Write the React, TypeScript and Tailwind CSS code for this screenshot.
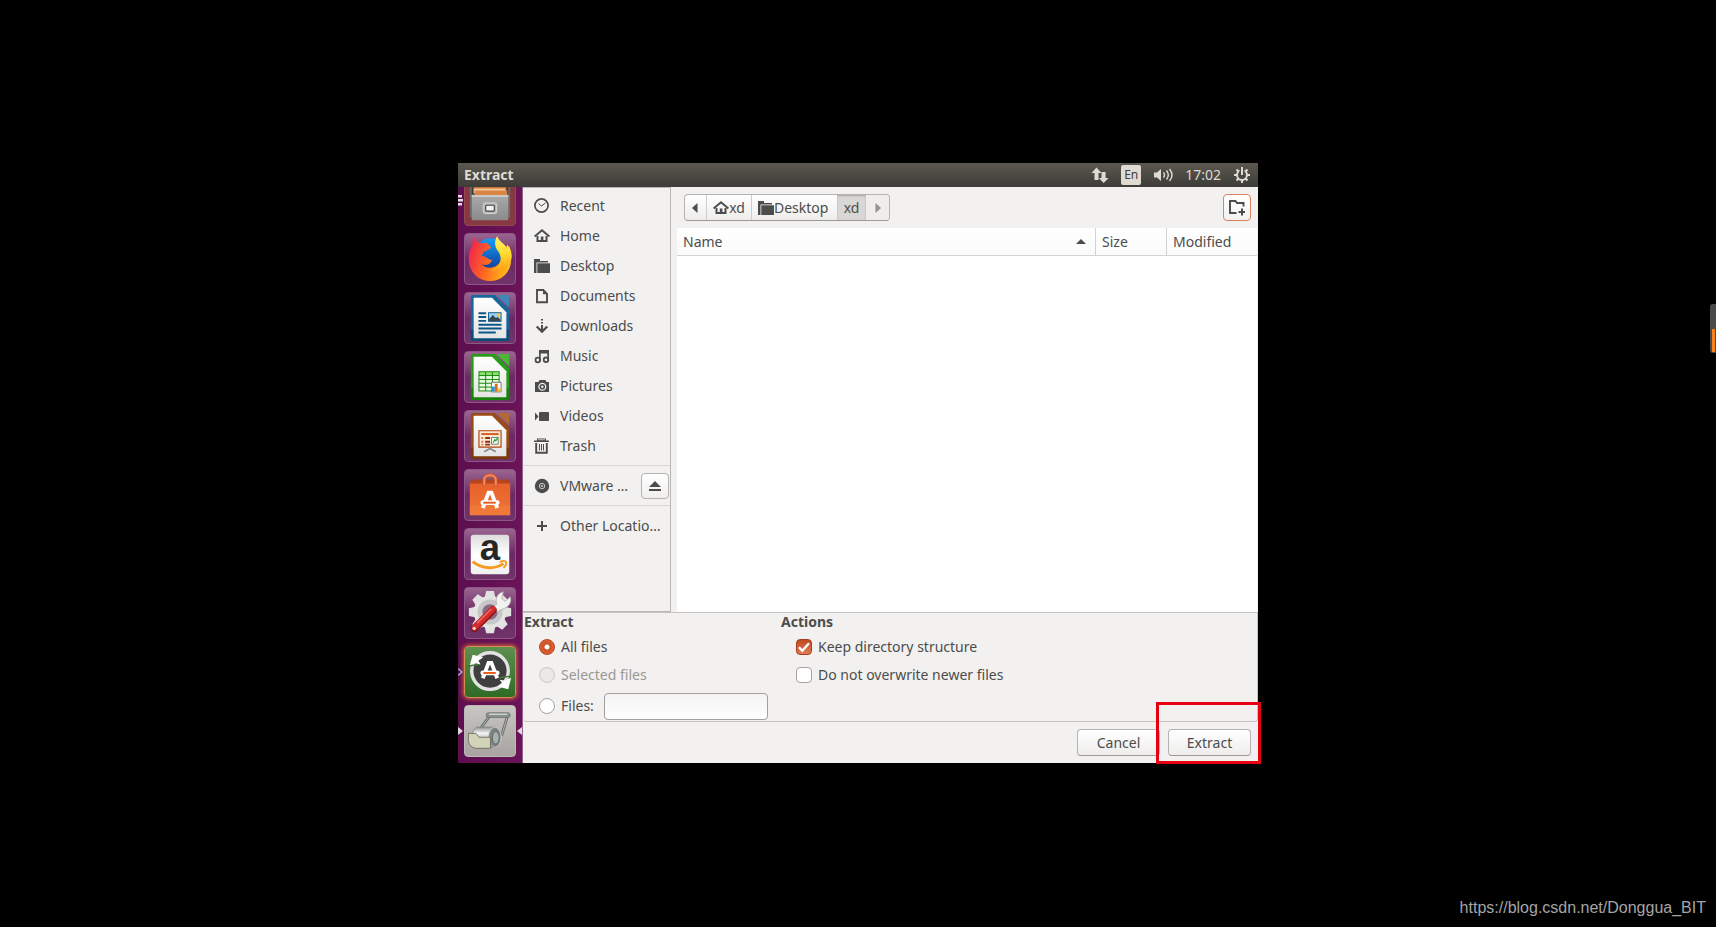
import { useState } from "react";
import type { ReactNode } from "react";

const INK = "#4c4c4c";

function Glyph({ children, className = "" }: { children: ReactNode; className?: string }) {
  return (
    <svg viewBox="0 0 16 16" className={`size-4 shrink-0 ${className}`} fill={INK} aria-hidden="true">
      {children}
    </svg>
  );
}

const RecentIcon = () => (
  <Glyph>
    <circle cx="7.500" cy="7.500" r="6.600" fill="none" stroke={INK} strokeWidth="1.700" />
    <path d="M4.500 5.500l3 2.600 4-3.200" fill="none" stroke={INK} strokeWidth="1" />
  </Glyph>
);

const HomeIcon = () => (
  <Glyph>
    <path d="M0.600 8.500L8 2.300 15.400 8.500" fill="none" stroke={INK} strokeWidth="2" />
    <path d="M3.500 8v4.900h9V8" fill="none" stroke={INK} strokeWidth="2" />
    <path d="M6.800 8.500h2.600V13H6.800z" />
  </Glyph>
);

const FolderIcon = () => (
  <Glyph>
    <path d="M0 1h6v2h8v1.500H2.500V15H0z" />
    <path d="M3.300 5.300H16V15H3.300z" />
  </Glyph>
);

const DocumentIcon = () => (
  <Glyph>
    <path d="M3 2h6.300L13 5.800V14.200H3z" fill="none" stroke={INK} strokeWidth="1.900" />
    <path d="M9 1.500V6.300h4.500z" />
  </Glyph>
);

const DownloadIcon = () => (
  <Glyph>
    <path d="M7 1h2v1.500H7zM7 4h2v1.500H7zM7 7h2v5H7z" />
    <path d="M2.700 8.500L8 13.600l5.300-5.100" fill="none" stroke={INK} strokeWidth="2.200" />
  </Glyph>
);

const MusicIcon = () => (
  <Glyph>
    <path d="M5 2h10v10.500h-1.700V5.500H6.700V13H5z" />
    <circle cx="3.800" cy="12" r="2.300" fill="none" stroke={INK} strokeWidth="1.800" />
    <circle cx="12" cy="11.800" r="2.300" fill="none" stroke={INK} strokeWidth="1.800" />
  </Glyph>
);

const CameraIcon = () => (
  <Glyph>
    <path
      fillRule="evenodd"
      d="M1 4h3.500l1-2h6l1 2H15v10H1zM8.300 4.700a4 4 0 1 0 .01 0z"
    />
    <circle cx="8.300" cy="8.700" r="2" fill="none" stroke={INK} strokeWidth="1.600" />
  </Glyph>
);

const VideoIcon = () => (
  <Glyph>
    <rect x="5" y="4" width="10" height="9" rx="0.800" />
    <path d="M1 4.500L4.500 8.500 1 12.500z" />
  </Glyph>
);

const TrashIcon = () => (
  <Glyph>
    <path d="M0 2.500h15v1.600H0zM3 0.500h9v2H3z" />
    <path d="M2.200 5v9.700h10.600V5" fill="none" stroke={INK} strokeWidth="1.900" />
    <path d="M5 6h1v6.500H5zM7 6h1v6.500H7zM9 6h1v6.500H9z" />
    <path d="M4 1.700h7" stroke="#f2f1f0" strokeWidth="0.700" />
  </Glyph>
);

const DiscIcon = () => (
  <Glyph>
    <circle cx="8" cy="8" r="7.200" />
    <circle cx="8" cy="8" r="2.700" fill="none" stroke="#c8c8c8" strokeWidth="1" />
    <circle cx="8" cy="8" r="0.900" fill="#e5e5e5" />
  </Glyph>
);

const PlusIcon = () => (
  <Glyph>
    <path d="M7 3h2v4h4v2H9v4H7V9H3V7h4z" />
  </Glyph>
);

/* ---------- launcher artwork ---------- */

function Art({ children }: { children: ReactNode }) {
  return (
    <svg viewBox="0 0 52 52" className="block size-full overflow-visible" aria-hidden="true">
      {children}
    </svg>
  );
}

const FilesArt = () => (
  <Art>
    <path d="M5 8h42v36H5z" fill="#6d6a68" />
    <path d="M7 8h38v12H7z" fill="#3f3b39" />
    <path d="M9 10h34v9H9z" fill="#c9712f" />
    <path d="M9 14h33v5H9z" fill="#f3c697" />
    <path d="M10 16h34v6H10z" fill="#d98544" />
    <path d="M7 21h38v26H7z" fill="url(#cabinet)" />
    <path d="M7 21h38v1.500H7z" fill="#d6d6d6" />
    <rect x="19" y="29" width="14" height="11" rx="2" fill="#b4b4b4" stroke="#d8d8d8" />
    <rect x="21.500" y="31.500" width="9" height="6" rx="1" fill="#f2f2f2" stroke="#444" strokeWidth="1.200" />
  </Art>
);

const FirefoxArt = () => (
  <Art>
    <circle cx="27" cy="21" r="16.500" fill="url(#globe)" />
    <path
      d="M10 3C11 7 13 9 16 9.500L23 9L27 14C25 17 20 17 18.500 20L17.500 23C22 23 24 27 28 27C27 32 21 33 17 31.500C22 37 32 36 36 30C39 25 38 18 34 12L46 13C48.500 18 49 23 48 27A22 22 0 0 1 4 27C3.500 21 5 16 7.500 12.500C7.500 8 8 5.500 10 3Z"
      fill="url(#fox)"
    />
    <path
      d="M33.500 2C30 8 31 14 34.500 18C38 23 38 29 34 33C31 36 28 37 24 37C36 42 46 36 48 26C49 20 47 15 44 11L43.500 15C42 10 35 8 33.500 2Z"
      fill="url(#flame)"
    />
  </Art>
);

function OfficeArt({ edge, dark, fold, children }: { edge: string; dark: string; fold: string; children: ReactNode }) {
  return (
    <Art>
      <path d="M9 2h22l15 15v30a3 3 0 0 1-3 3H9a3 3 0 0 1-3-3V5a3 3 0 0 1 3-3z" fill={edge} />
      <path d="M6 38h40v9a3 3 0 0 1-3 3H9a3 3 0 0 1-3-3z" fill={dark} opacity="0.600" />
      <path d="M9 5h19l15 15v27H9z" fill="url(#paper)" />
      <path d="M33 2h13v13z" fill={fold} />
      {children}
    </Art>
  );
}

const WriterArt = () => (
  <OfficeArt edge="#18679c" dark="#003c63" fold="#3e88b8">
    <g fill="#0b5788">
      <path d="M14 20h8v2h-8zM14 24h8v2h-8zM14 28h8v2h-8zM14 32h24v2H14zM14 36h24v2H14zM14 40h18v2H14z" />
      <path d="M24 20h14v10H24z" />
    </g>
    <path d="M25 21h12v8H25z" fill="#9ad0f3" />
    <circle cx="35" cy="23" r="2" fill="#f5c73c" />
    <path d="M25 29v-2l4-4 3 3 2-1 3 3v1z" fill="#394650" />
  </OfficeArt>
);

const CalcArt = () => (
  <OfficeArt edge="#289c18" dark="#0b7301" fold="#48b835">
    <path d="M14 20h22v21H14z" fill="#17850b" />
    {[21, 25, 29, 33, 37].map((y) =>
      [15, 22, 29].map((x) => (
        <rect key={`${x}-${y}`} x={x} y={y} width="6" height="3" fill={y === 21 ? "#8ee072" : "#e4fbdc"} />
      ))
    )}
    <path d="M27.500 31.500h10v10h-10z" fill="#fff" stroke="#777" />
    <path d="M28 36h3v5h-3z" fill="#1b9be0" />
    <path d="M31 33h3v8h-3z" fill="#e2671d" />
    <path d="M34 38h3v3h-3z" fill="#f2c21a" />
  </OfficeArt>
);

const ImpressArt = () => (
  <OfficeArt edge="#9a4c17" dark="#6a2b02" fold="#b36a38">
    <path d="M14.500 20.500h23v17h-23z" fill="#fce9dc" stroke="#b2420a" strokeWidth="1.200" />
    <path d="M17 23h18v2H17z" fill="#d95a19" />
    <path d="M17 27h2v2h-2zM17 31h2v2h-2zM17 34h2v2h-2z" fill="#e07a42" />
    <path d="M21 27h5v2h-5zM21 31h5v2h-5zM21 34h5v2h-5z" fill="#8d3209" />
    <path d="M27.500 27.500h7v7h-7z" fill="#fff" stroke="#5f8360" />
    <path d="M29 33l2-3 1 1 2-3" fill="none" stroke="#27a03a" strokeWidth="1.300" />
    <path d="M26 38v2m0-1l-6 3.500m6-3.500l6 3.500" fill="none" stroke="#8a8a8a" strokeWidth="1.800" />
  </OfficeArt>
);

const ToolsMark = () => (
  <g>
    <path d="M18.500 39.500l6-16h3l6 16" fill="none" stroke="#fff" strokeWidth="4" />
    <path d="M18.500 34h15" stroke="#fff" strokeWidth="5" strokeLinecap="round" />
    <path d="M19 34h13" stroke="#ea5a1c" strokeWidth="2" />
  </g>
);

const SoftwareArt = () => (
  <Art>
    <path d="M7 10h38l2 5H5z" fill="#b8441c" />
    <path d="M5 14h42v33H5z" fill="url(#bag)" />
    <path d="M5 37h42v10H5z" fill="#ff8848" opacity="0.300" />
    <path d="M20 17V10c0-6 12-6 12 0v7" fill="none" stroke="#c9552b" strokeWidth="4" />
    <path d="M20 16V10c0-6 12-6 12 0v6" fill="none" stroke="#f18a62" strokeWidth="2" />
    <ToolsMark />
  </Art>
);

const AmazonArt = () => (
  <Art>
    <rect x="6" y="6" width="40" height="41" rx="3" fill="url(#plate)" />
    <text x="26" y="32" textAnchor="middle" fontFamily="Liberation Sans, sans-serif" fontWeight="700" fontSize="38" fill="#262626">
      a
    </text>
    <path d="M8 34c10 8 23 8 32 2" fill="none" stroke="#f79a1f" strokeWidth="3" />
    <path d="M36 34.500c3-1.500 6-1.500 7 0 0 2-1 4-3 6" fill="none" stroke="#f79a1f" strokeWidth="2" />
  </Art>
);

const SettingsArt = () => (
  <Art>
    <g transform="translate(26 25)">
      {[0, 45, 90, 135, 180, 225, 270, 315].map((a) => (
        <path key={a} d="M-6-13l2-9h8l2 9z" fill="#e2e2e1" transform={`rotate(${a})`} />
      ))}
      <circle r="17" fill="#e4e4e4" />
      <circle r="13" fill="#c7c7c7" />
      <circle r="8" fill="#8b6985" />
    </g>
    <path d="M33 17C31 11 34 5 40 4L38 11L42 14L47 9C49 14 46 20 39 22L33 25L28 21Z" fill="#f2f2f2" stroke="#a9a9a9" strokeWidth="0.800" />
    <path d="M29 23L10 42" stroke="#8d1515" strokeWidth="8" strokeLinecap="round" />
    <path d="M29 22L10 41" stroke="#d32b2b" strokeWidth="6" strokeLinecap="round" />
    <path d="M27 22L13 36" stroke="#ef6a62" strokeWidth="1.500" strokeLinecap="round" />
    <circle cx="9.500" cy="42" r="1.700" fill="#f3dada" />
  </Art>
);

const UpdaterArt = () => (
  <Art>
    <circle cx="26" cy="25" r="19" fill="#3f3f3f" stroke="#e3e3e3" strokeWidth="3.500" />
    <path d="M2 20L16 18M36 32L50 30" stroke="#457a3a" strokeWidth="1.500" />
    <path d="M5 19L8 8L19 11L14 14L16 18L10 17Z" fill="#fff" />
    <path d="M48 32L45 44L34 41L39 38L36 34L42 35Z" fill="#fff" />
    <g transform="translate(0 -7)">
      <ToolsMark />
    </g>
  </Art>
);

const RollerArt = () => (
  <Art>
    <path d="M15 25L25 11M44 11L38 31" fill="none" stroke="#6a706d" strokeWidth="3" />
    <path d="M15 25L25 11M44 11L38 31" fill="none" stroke="#aeb4b1" strokeWidth="1" />
    <rect x="22" y="7" width="25" height="5" rx="2.500" fill="#8a908e" stroke="#6a706d" strokeWidth="0.800" />
    <path d="M25 8.500h19" stroke="#dfe2e1" strokeWidth="1.200" />
    <path d="M12 22h20v21H12c-6-3-6-18 0-21z" fill="url(#drum)" stroke="#7b807e" strokeWidth="0.800" />
    <ellipse cx="31" cy="32.500" rx="6.500" ry="10.500" fill="#7d8381" stroke="#c6c9c8" />
    <ellipse cx="32" cy="33" rx="3.500" ry="6.500" fill="#a9afac" stroke="#50605a" strokeWidth="0.800" />
    <path d="M3.500 28.500h8l3 4h12v11.500H12c-5 0-8-4-8.500-8z" fill="#d2d3b8" stroke="#66685a" strokeWidth="0.900" />
  </Art>
);

function ArtDefs() {
  return (
    <svg className="absolute size-0" aria-hidden="true">
      <defs>
        <linearGradient id="cabinet" x2="0" y2="1"><stop stopColor="#aaa" /><stop offset="1" stopColor="#8a8a8a" /></linearGradient>
        <linearGradient id="globe" x2="0" y2="1"><stop stopColor="#149cf5" /><stop offset="1" stopColor="#123b9c" /></linearGradient>
        <linearGradient id="fox" x1="0" y1="0.300" x2="1" y2="0.600"><stop stopColor="#f0254f" /><stop offset="0.450" stopColor="#ff6423" /><stop offset="1" stopColor="#ffc016" /></linearGradient>
        <linearGradient id="flame" x2="0" y2="1"><stop stopColor="#fff26a" /><stop offset="0.500" stopColor="#ffdc2f" /><stop offset="1" stopColor="#ff9a1a" /></linearGradient>
        <linearGradient id="paper" x2="0" y2="1"><stop stopColor="#fff" /><stop offset="1" stopColor="#e4e4e4" /></linearGradient>
        <linearGradient id="bag" x2="0" y2="1"><stop stopColor="#e7622b" /><stop offset="1" stopColor="#ee7434" /></linearGradient>
        <linearGradient id="plate" x2="0" y2="1"><stop stopColor="#dcdcdc" /><stop offset="0.500" stopColor="#fff" /><stop offset="1" stopColor="#f0f0f0" /></linearGradient>
        <linearGradient id="drum" x2="0" y2="1"><stop stopColor="#8e9391" /><stop offset="0.300" stopColor="#f4f5f4" /><stop offset="1" stopColor="#6d7270" /></linearGradient>
      </defs>
    </svg>
  );
}

const PURPLE_TILE = "bg-linear-to-b from-[#9a6590] via-[#6c2864] to-[#70346a] border-[#8d5686]";

const APPS: { name: string; art: ReactNode; tile: string; left?: "pips" | "solid" | "hollow"; right?: boolean }[] = [
  { name: "Files", art: <FilesArt />, tile: "bg-[#883840] border-[#94484f]", left: "pips" },
  { name: "Firefox", art: <FirefoxArt />, tile: PURPLE_TILE },
  { name: "Writer", art: <WriterArt />, tile: PURPLE_TILE },
  { name: "Calc", art: <CalcArt />, tile: PURPLE_TILE },
  { name: "Impress", art: <ImpressArt />, tile: PURPLE_TILE },
  { name: "Software", art: <SoftwareArt />, tile: PURPLE_TILE },
  { name: "Amazon", art: <AmazonArt />, tile: PURPLE_TILE },
  { name: "Settings", art: <SettingsArt />, tile: PURPLE_TILE },
  {
    name: "Updater",
    art: <UpdaterArt />,
    tile: "bg-linear-to-b from-[#5d8f4f] to-[#2f6b26] border-[#d98a50] shadow-[0_0_4px_1px_#d9643a]",
    left: "hollow",
  },
  { name: "Archive Manager", art: <RollerArt />, tile: "bg-linear-to-b from-[#c9c5c3] to-[#a9a4a2] border-[#bdb9b6]", left: "solid", right: true },
];

function Launcher() {
  return (
    <nav aria-label="Launcher" className="flex w-[65px] shrink-0 flex-col justify-end gap-[7px] overflow-hidden border-r border-[#94628d] bg-linear-to-r from-[#5c0e4d] to-[#6b1459] pb-[6px]">
      {APPS.map((app) => (
        <div key={app.name} className="relative flex h-[52px] shrink-0 pl-[6px]">
          <button type="button" aria-label={app.name} className={`size-[52px] rounded-[4px] border ${app.tile}`}>
            {app.art}
          </button>
          {app.left && (
            <svg viewBox="0 0 6 12" className="absolute left-0 top-5 h-3 w-[6px]" aria-hidden="true">
              {app.left === "pips" && <path d="M0 1h4v2.500H0zM0 5h5v2.500H0zM0 9h4v2.500H0z" fill="#e6dbe4" />}
              {app.left === "solid" && <path d="M0 2l5 4-5 4z" fill="#e3d9e1" />}
              {app.left === "hollow" && <path d="M0 2.500L4 6 0 9.500" fill="none" stroke="#9eb4e0" strokeWidth="1.300" />}
            </svg>
          )}
          {app.right && (
            <svg viewBox="0 0 6 12" className="absolute right-0 top-5 h-3 w-[6px]" aria-hidden="true">
              <path d="M6 2L1 6l5 4z" fill="#e3d9e1" />
            </svg>
          )}
        </div>
      ))}
    </nav>
  );
}

function TopBar() {
  return (
    <header className="flex h-6 shrink-0 items-center justify-between bg-linear-to-b from-[#5b584f] to-[#3d3c38] pl-[6px] pr-2 text-[#dfdbd2]">
      <h1 className="text-[14px] leading-5 font-bold">Extract</h1>
      <div className="flex items-center">
        <svg viewBox="0 0 18 16" className="h-4 w-[18px]" fill="#dfdbd2" aria-label="Network">
          <path d="M5.500 0.500L10.500 6H7.500v7h-4V6h-3zM10.500 5v6H7.800l4.900 5L17.600 11h-3V5z" />
        </svg>
        <span className="ml-3 flex h-5 w-5 items-center justify-center rounded-[2px] bg-[#dfdbd2] text-[12px] text-[#3f3e3a]">En</span>
        <svg viewBox="0 0 20 16" className="ml-3 h-4 w-5" fill="#dfdbd2" aria-label="Volume">
          <path d="M1 5.500h3L8 2v12l-4-3.500H1z" />
          <path d="M10.500 5.500q2 2.500 0 5M13.500 3.500q3.600 4.500 0 9M16.500 2q5 6 0 12" fill="none" stroke="#dfdbd2" strokeWidth="1.400" />
        </svg>
        <time className="ml-3 text-[14px] leading-5">17:02</time>
        <svg viewBox="0 0 16 16" className="ml-[13px] size-4" fill="none" stroke="#dfdbd2" aria-label="Session">
          <circle cx="8" cy="8" r="5" strokeWidth="2" />
          <path d="M8 13v3M3 8H0M13 8h3M4.500 11.500l-2 2M11.500 11.500l2 2M4.500 4.500l-2-2M11.500 4.500l2-2" strokeWidth="2" />
          <path d="M8 0v7" stroke="#4c4a44" strokeWidth="5" />
          <path d="M8 0v8" strokeWidth="2" />
        </svg>
      </div>
    </header>
  );
}

const PLACES: [string, ReactNode][] = [
  ["Recent", <RecentIcon />],
  ["Home", <HomeIcon />],
  ["Desktop", <FolderIcon />],
  ["Documents", <DocumentIcon />],
  ["Downloads", <DownloadIcon />],
  ["Music", <MusicIcon />],
  ["Pictures", <CameraIcon />],
  ["Videos", <VideoIcon />],
  ["Trash", <TrashIcon />],
];

function Place({ name, icon }: { name: string; icon: ReactNode }) {
  return (
    <a href="#" className="flex h-[30px] flex-1 items-center gap-[10px] pl-[11px] whitespace-nowrap">
      {icon}
      <span>{name}</span>
    </a>
  );
}

function Sidebar() {
  return (
    <aside className="flex w-[148px] shrink-0 flex-col border-t border-r border-b border-[#bab7b5] pt-[3px]">
      {PLACES.map(([name, icon]) => (
        <div key={name} className="flex">
          <Place name={name} icon={icon} />
        </div>
      ))}
      <div className="mt-1 flex items-center border-t border-[#d9d7d5] pt-[5px] pr-px pb-1">
        <Place name="VMware …" icon={<DiscIcon />} />
        <button type="button" aria-label="Eject" className="flex h-[26px] w-7 items-center justify-center rounded-[4px] border border-[#b5b2b0] bg-linear-to-b from-white to-[#f0efee]">
          <svg viewBox="0 0 12 12" className="size-3" fill={INK} aria-hidden="true">
            <path d="M6 1l6 6H0zM0 9h12v2H0z" />
          </svg>
        </button>
      </div>
      <div className="flex border-t border-[#d9d7d5] pt-[5px]">
        <Place name="Other Locatio…" icon={<PlusIcon />} />
      </div>
    </aside>
  );
}

function PathBar() {
  return (
    <div className="flex items-center justify-between py-[7px] pr-[7px] pl-[7px]">
      <div className="flex h-[27px] overflow-hidden rounded-[4px] border border-[#b5b2b0] border-b-[#9c9a98] bg-linear-to-b from-white to-[#eeedec]">
        <button type="button" aria-label="Back" className="flex w-[21px] items-center justify-center pr-px">
          <svg viewBox="0 0 6 10" className="h-[10px] w-[6px]" fill={INK}><path d="M5.500 0v10L0 5z" /></svg>
        </button>
        <button type="button" className="flex w-[45px] items-center justify-center border-l border-[#cfcccb]">
          <HomeIcon />
          xd
        </button>
        <button type="button" className="flex w-[86px] items-center border-l border-[#cfcccb] pl-[6px]">
          <FolderIcon />
          Desktop
        </button>
        <button type="button" className="w-[29px] bg-[#d8d7d6] shadow-[inset_0_1px_2px_#aaa]">xd</button>
        <button type="button" aria-label="Forward" className="flex w-[23px] items-center justify-center bg-[#efeeed]">
          <svg viewBox="0 0 6 10" className="h-[10px] w-[6px]" fill="#94918e"><path d="M0.500 0v10L6 5z" /></svg>
        </button>
      </div>
      <button type="button" aria-label="Create folder" className="flex h-[27px] w-7 items-center justify-center rounded-[4px] border border-[#dc8263] bg-linear-to-b from-white to-[#f3f2f1]">
        <Glyph>
          <path d="M7.500 13H1V1h5.500l1.500 2h6.500v3.500" fill="none" stroke={INK} strokeWidth="1.900" />
          <path d="M12 8.500h2v2.500h2v2h-2v2.500h-2V13H9.500v-2H12z" />
        </Glyph>
      </button>
    </div>
  );
}

function FileList() {
  return (
    <div className="mr-px flex-1 bg-white">
      <table className="w-full table-fixed border-separate border-spacing-0">
        <thead>
          <tr className="h-7 bg-linear-to-b from-white to-[#fafafa] text-left">
            <th scope="col" className="border-b border-[#d5d2d0] pl-[6px] font-normal">
              <span className="flex items-center justify-between pr-[9px]">
                Name
                <svg viewBox="0 0 10 5" className="h-[5px] w-[10px]" fill={INK}><path d="M0 5l5-5 5 5z" /></svg>
              </span>
            </th>
            <th scope="col" className="w-[71px] border-b border-l border-[#d5d2d0] pl-[6px] font-normal">Size</th>
            <th scope="col" className="w-[91px] border-b border-l border-[#d5d2d0] pl-[6px] font-normal">Modified</th>
          </tr>
        </thead>
        <tbody />
      </table>
    </div>
  );
}

const RADIO =
  "size-4 shrink-0 appearance-none rounded-full border border-[#a5a2a0] bg-white checked:border-[#b5431d] checked:bg-[radial-gradient(circle,#fff_0_2px,#c9501f_3px,#e0673c_8px)] disabled:border-[#cbc9c7] disabled:bg-[#e9e8e7]";

const CHECK =
  "peer size-4 shrink-0 appearance-none rounded-[4px] border border-[#a5a2a0] bg-white checked:border-[#a53f1b] checked:bg-linear-to-b checked:from-[#c04a1e] checked:to-[#e07a54]";

function CheckRow({ label, initial }: { label: string; initial: boolean }) {
  const [on, setOn] = useState(initial);
  return (
    <label className="flex h-7 items-center gap-[6px]">
      <span className="relative flex">
        <input type="checkbox" className={CHECK} checked={on} onChange={() => setOn(!on)} />
        <svg viewBox="0 0 16 16" className="pointer-events-none absolute inset-0 size-4 opacity-0 peer-checked:opacity-100" aria-hidden="true">
          <path d="M3 8.200l3.300 3.500L13 4.300" fill="none" stroke="#fff" strokeWidth="2.300" />
        </svg>
      </span>
      {label}
    </label>
  );
}

function Options() {
  const [mode, setMode] = useState("all");
  return (
    <form className="flex h-[110px] shrink-0 rounded-b-[4px] border-t border-b border-r border-[#c5c2c0] pl-px">
      <fieldset className="w-[257px]">
        <legend className="h-5 leading-[18px] font-bold">Extract</legend>
        <div className="pl-[15px]">
          <label className="flex h-7 items-center gap-[6px]">
            <input type="radio" name="mode" className={RADIO} checked={mode === "all"} onChange={() => setMode("all")} />
            All files
          </label>
          <label className="flex h-7 items-center gap-[6px] text-[#9a9793]">
            <input type="radio" name="mode" className={RADIO} disabled />
            Selected files
          </label>
          <div className="flex h-[31px] items-end">
            <label className="flex h-7 w-[65px] items-center gap-[6px]">
              <input type="radio" name="mode" className={RADIO} checked={mode === "files"} onChange={() => setMode("files")} />
              Files:
            </label>
            <input type="text" aria-label="File pattern" className="h-[27px] w-[164px] rounded-[4px] border border-[#a3a09e] bg-linear-to-b from-[#f3f3f3] to-white px-2" />
          </div>
        </div>
      </fieldset>
      <fieldset className="flex-1">
        <legend className="h-5 leading-[18px] font-bold">Actions</legend>
        <div className="pl-[15px]">
          <CheckRow label="Keep directory structure" initial />
          <CheckRow label="Do not overwrite newer files" initial={false} />
        </div>
      </fieldset>
    </form>
  );
}

const BUTTON = "h-[27px] w-[83px] rounded-[4px] border border-[#b5b2b0] border-b-[#9c9a98] bg-linear-to-b from-white to-[#eeedec]";

export default function App() {
  return (
    <div className="relative flex min-h-screen items-center justify-center overflow-hidden bg-black pb-px font-['Noto_Sans',sans-serif] text-[14px] leading-5 text-[#4c4c4c]">
      <ArtDefs />
      <main className="flex h-[600px] w-full max-w-[800px] flex-col">
        <TopBar />
        <div className="flex min-h-0 flex-1">
          <Launcher />
          <section className="flex min-w-0 flex-1 flex-col bg-[#f2f1f0]">
            <div className="flex min-h-0 flex-1">
              <Sidebar />
              <div className="flex min-w-0 flex-1 flex-col pl-[6px]">
                <PathBar />
                <FileList />
              </div>
            </div>
            <Options />
            <footer className="relative flex h-[41px] shrink-0 items-center justify-end gap-2 pr-[7px]">
              <button type="button" className={BUTTON}>Cancel</button>
              <button type="button" className={BUTTON}>Extract</button>
              <div className="pointer-events-none absolute -right-[3px] -bottom-px h-[62px] w-[105px] border-[3px] border-[#e60012]" />
            </footer>
          </section>
        </div>
      </main>
      <div className="absolute top-[304px] right-0 flex h-[49px] w-[6px] items-end rounded-l-[3px] bg-[#4a4a4a] pb-px pl-[2px]">
        <div className="h-[23px] w-[3px] bg-[#f58220]" />
      </div>
      <a href="https://blog.csdn.net/Donggua_BIT" className="absolute right-[10px] bottom-[9px] font-['Liberation_Sans',sans-serif] text-[16px] leading-5 text-[#a5a5a5]">
        https://blog.csdn.net/Donggua_BIT
      </a>
    </div>
  );
}
